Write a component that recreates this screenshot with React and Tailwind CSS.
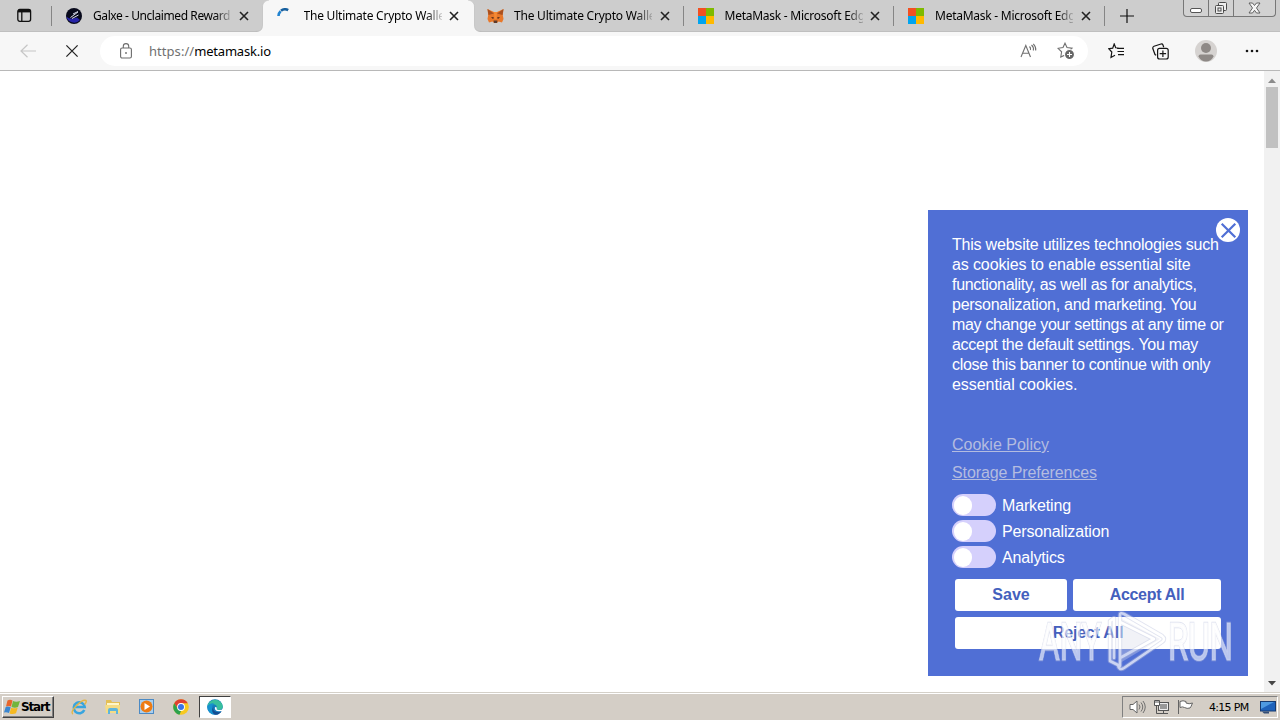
import React from "react";

function Cross({ className = "" }) {
  return (
    <svg viewBox="0 0 10 10" className={"shrink-0 " + className} fill="none" stroke="currentColor">
      <path d="M1 1l8 8M9 1l-8 8" />
    </svg>
  );
}

function GalxeIcon() {
  return (
    <svg width="16" height="16" viewBox="0 0 16 16" className="shrink-0">
      <circle cx="8" cy="8" r="8" fill="#080a1c" />
      <path d="M.3 8.5C2 10.500 6 11.500 11 9.500L14 12A8 8 0 0 1 .3 8.500Z" fill="#2724a8" />
      <path d="M4.500 9.500L12 4M6 10.500l6.500-3.500M7 6l5-2.500" stroke="#d9dcec" strokeWidth="1" fill="none" />
    </svg>
  );
}

function Spinner() {
  return (
    <svg width="16" height="16" viewBox="0 0 16 16" className="shrink-0" fill="none" strokeWidth="2.600">
      <path d="M1.500 8A6.500 6.500 0 0 1 3.600 3.200" stroke="#2183d0" />
      <path d="M4 2.800A6.500 6.500 0 0 1 11.200 2.200" stroke="#17609f" />
    </svg>
  );
}

function FoxIcon() {
  return (
    <svg width="17" height="16" viewBox="0 0 17 16" className="shrink-0">
      <path d="M.5 1L7 4h3l6.500-3-.7 6 .7 4-1.500 3.500-3.500-1L10 15H7l-1.500-1.500-3.500 1L.5 11l.7-4z" fill="#e8782a" />
      <path d="M.5 1L7 5.500 1.500 7zM16.500 1L10 5.500 15.500 7z" fill="#a9501f" />
      <path d="M6.500 12.500h4L10 15H7z" fill="#5b3b2c" />
      <path d="M4 9l3 .5-1 1.500zM13 9l-3 .5 1 1.500z" fill="#40251b" />
      <path d="M7 4h3l-.5 7h-2z" fill="#f58a34" />
    </svg>
  );
}

function MicrosoftIcon() {
  return (
    <span className="grid h-4 w-4 shrink-0 grid-cols-2">
      <i className="bg-[#f25022]" />
      <i className="bg-[#7fba00]" />
      <i className="bg-[#00a4ef]" />
      <i className="bg-[#ffb900]" />
    </span>
  );
}

const tabs = [
  { icon: GalxeIcon, title: "Galxe - Unclaimed Reward", tracking: "tracking-[-0.42px]" },
  { icon: Spinner, title: "The Ultimate Crypto Walle", tracking: "tracking-[-0.22px]", active: true },
  { icon: FoxIcon, title: "The Ultimate Crypto Walle", tracking: "tracking-[-0.22px]", divider: true },
  { icon: MicrosoftIcon, title: "MetaMask - Microsoft Edg", tracking: "tracking-[-0.25px]", divider: true },
  { icon: MicrosoftIcon, title: "MetaMask - Microsoft Edg", tracking: "tracking-[-0.25px]", divider: true },
];

function Tab({ icon: Icon, title, tracking, active, divider }) {
  return (
    <div className={"relative flex h-8 w-[210.5px] shrink-0 items-center pl-3.5 " + (active ? "z-10" : "")}>
      {active && (
        <svg className="absolute -left-2 top-0" width="228" height="32" viewBox="0 0 228 32">
          <path d="M0 32C5 32 7.500 30 7.500 25V7C7.500 3 10 0 14 0H213C217 0 219.500 3 219.500 7V25C219.500 30 222 32 227 32Z" fill="#f7f7f7" />
          <path d="M0 31.500C5 31.500 7.500 30 7.500 25V7C7.500 3 10 .5 14 0M213 0C217 .5 219.500 3 219.500 7V25C219.500 30 222 31.500 227 31.500" fill="none" stroke="#bdbdbd" strokeWidth=".7" />
        </svg>
      )}
      <span className="relative flex w-[27px] shrink-0">
        <Icon />
      </span>
      <span className={"relative w-[138px] shrink-0 whitespace-nowrap text-[12px] leading-4 text-black [mask-image:linear-gradient(to_right,black_122px,transparent_141px)] " + tracking}>
        {title}
      </span>
      <Cross className="relative ml-[7.500px] h-[10px] w-[10px] stroke-[1.6] text-[#222]" />
      {divider && <span className="absolute right-0 top-1.5 h-5 w-px bg-[#858585]" />}
    </div>
  );
}

function WindowControls() {
  return (
    <div className="ml-auto mr-[4px] flex h-[17px] w-[93px] shrink-0 self-start rounded-b-[4px] border border-t-0 border-[#777] bg-[#d2d2d2]">
      <span className="flex w-[25px] items-center justify-center border-r border-[#777]">
        <i className="mt-1 h-[5px] w-3 rounded-[2px] border border-[#555] bg-white" />
      </span>
      <span className="flex w-[25px] items-center justify-center border-r border-[#777]">
        <svg width="14" height="14" viewBox="0 0 14 14" fill="#eee" stroke="#4a4a4a">
          <rect x="4.500" y="1.500" width="8" height="8" rx="1" />
          <rect x="1.500" y="4.500" width="8" height="8" rx="1" />
          <rect x="4" y="7" width="3" height="3" />
        </svg>
      </span>
      <span className="flex flex-1 items-center justify-center">
        <svg width="13" height="12" viewBox="0 0 13 12">
          <path d="M1 1h3.500l2 2.500L8.500 1H12L8.500 6l3.500 5H8.500l-2-2.700L4.500 11H1l3.500-5z" fill="#f5f5f5" stroke="#555" strokeWidth=".9" />
        </svg>
      </span>
    </div>
  );
}

function TabStrip() {
  return (
    <div className="flex h-8 items-center border-b border-[#bfbfbf] bg-[#cdcdcd]">
      <div className="relative flex h-8 w-[52px] shrink-0 items-center pl-[17px]">
        <svg width="15" height="15" viewBox="0 0 15 15" fill="none" stroke="#111" strokeWidth="1.300">
          <rect x=".8" y="1.500" width="12.800" height="11.800" rx="2" />
          <path d="M1 3h12.500" strokeWidth="2.800" />
          <path d="M4.800 4v9" />
        </svg>
        <span className="absolute right-0 top-1.5 h-5 w-px bg-[#858585]" />
      </div>
      {tabs.map((t, i) => (
        <Tab key={i} {...t} />
      ))}
      <svg width="14" height="14" viewBox="0 0 14 14" className="ml-[15px] shrink-0" stroke="#111" strokeWidth="1.200">
        <path d="M7 0v14M0 7h14" />
      </svg>
      <WindowControls />
    </div>
  );
}

function Toolbar() {
  return (
    <div className="flex h-[39px] items-center border-b border-[#b8b8b8] bg-[#f7f7f7]">
      <svg width="16" height="14" viewBox="0 0 16 14" className="ml-5 shrink-0" fill="none" stroke="#c6c6c6" strokeWidth="1.200">
        <path d="M16 7H1M7.500 .7L1 7l6.500 6.300" />
      </svg>
      <Cross className="ml-[29px] h-[14px] w-[14px] stroke-[0.9] text-[#222]" />
      <div className="ml-[21px] flex h-[30px] w-[988px] shrink-0 items-center rounded-full bg-white pl-5">
        <svg width="12" height="16" viewBox="0 0 12 16" fill="none" stroke="#6c6c6c" strokeWidth="1.100">
          <rect x=".6" y="5" width="10.800" height="10" rx="1.500" />
          <path d="M3.300 5V3.300a2.700 2.700 0 0 1 5.400 0V5" />
          <circle cx="6" cy="10" r=".9" fill="#6c6c6c" stroke="none" />
        </svg>
        <span className="ml-[17px] text-[13px] leading-5 tracking-[-0.2px] text-black">
          <span className="tracking-[0.05px] text-[#707070]">https://</span>metamask.io
        </span>
        <div className="ml-auto mr-[13px] flex items-center gap-5">
          <svg width="17" height="16" viewBox="0 0 17 16" fill="none" stroke="#707070" strokeWidth="1.100">
            <path d="M1 14L5.800 2.500 10.500 14M2.600 10.200h6.300M9.500 3.500q1.500 1.500 1 3.500M11.500 2q2.600 2.300 1.800 5.500M13.300 .8q3 3 2.400 6.700" />
          </svg>
          <svg width="18" height="18" viewBox="0 0 18 18" fill="none" stroke="#707070" strokeWidth="1.100">
            <path d="M8 1.200L10 5.600l5 .6-3.500 3.400L8 13l-4.200 2 .8-5.200L1 6.300l5-.7z" />
            <circle cx="12.500" cy="12.500" r="5" fill="#666" stroke="#fff" />
            <path d="M12.500 10v5M10 12.500h5" stroke="#fff" />
          </svg>
        </div>
      </div>
      <svg width="17" height="16" viewBox="0 0 17 16" className="ml-5 shrink-0" fill="none" stroke="#151515" strokeWidth="1.200">
        <path d="M10.500 5L7.700 4.800 6.200 1 4.700 5.200.8 5.700l3 3.300-.8 5.500 4-2.200M9 5.300h7M9.500 8.500H16M10 11.700h6" />
      </svg>
      <svg width="17" height="17" viewBox="0 0 17 17" className="ml-[27px] shrink-0" fill="none" stroke="#151515" strokeWidth="1.200">
        <path d="M4.200 12.200L3 11.500 .8 5.500Q.5 3.800 2 3.200L9 1q1.500-.3 2 1l.7 2.200" />
        <rect x="5.600" y="5.400" width="10.600" height="10.600" rx="2" />
        <path d="M10.900 7.500v6.400M7.700 10.700h6.400" />
      </svg>
      <svg width="22" height="22" viewBox="0 0 22 22" className="ml-[26px] shrink-0">
        <circle cx="11" cy="11" r="11" fill="#d6d3d1" />
        <circle cx="11" cy="8" r="5" fill="#8e8986" />
        <path d="M3.500 16.500q0-2 2-2h11q2 0 2 2Q16 21.500 11 21.500T3.500 16.500z" fill="#8e8986" />
      </svg>
      <svg width="14" height="4" viewBox="0 0 14 4" className="ml-7 shrink-0" fill="#151515">
        <circle cx="2" cy="2" r="1.300" />
        <circle cx="7" cy="2" r="1.300" />
        <circle cx="12" cy="2" r="1.300" />
      </svg>
    </div>
  );
}

function Toggle({ label }) {
  return (
    <div className="flex h-[22px] items-center gap-1.5">
      <span className="flex h-[22px] w-11 items-center rounded-full bg-[#d5d0fc] pl-0.5">
        <i className="h-[19px] w-[18px] rounded-full bg-white" />
      </span>
      <span className="pt-0.5 leading-5 tracking-[-0.15px]">{label}</span>
    </div>
  );
}

function WatermarkWord({ x, width, children }) {
  return (
    <g fontFamily="Roboto, sans-serif" fontSize="52" fontWeight="400">
      <text x={x} y="52" textLength={width} lengthAdjust="spacingAndGlyphs" fill="none" stroke="#b9bfdc" strokeOpacity=".6" strokeWidth="2.500">
        {children}
      </text>
      <text x={x} y="52" textLength={width} lengthAdjust="spacingAndGlyphs" fill="#fff" fillOpacity=".85" stroke="#fff" strokeWidth=".6">
        {children}
      </text>
    </g>
  );
}

function Watermark() {
  return (
    <svg className="absolute left-[108px] top-[398px] opacity-70" width="200" height="68" viewBox="0 0 200 68">
      <WatermarkWord x={3} width={62}>ANY</WatermarkWord>
      <WatermarkWord x={132} width={65}>RUN</WatermarkWord>
      <path d="M84 10L124 31 84 55Z" fill="#d9dce9" fillOpacity=".5" />
      <g fill="none" strokeLinejoin="round" strokeLinecap="round">
        <path d="M78 50V10L74 13V53L84 58V50L118 31 84 14V50M84 14V7Q84 4 88 6L126 28Q130 31 126 34L88 60Q83 63 82 57" stroke="#b9bfdc" strokeOpacity=".6" strokeWidth="4.500" />
        <path d="M78 50V10L74 13V53L84 58V50L118 31 84 14V50M84 14V7Q84 4 88 6L126 28Q130 31 126 34L88 60Q83 63 82 57" stroke="#fff" strokeWidth="2.600" />
      </g>
    </svg>
  );
}

const message = [
  ["This website utilizes technologies such", "tracking-[-0.21px]"],
  ["as cookies to enable essential site", "tracking-[-0.12px]"],
  ["functionality, as well as for analytics,", "tracking-[-0.3px]"],
  ["personalization, and marketing. You", "tracking-[-0.26px]"],
  ["may change your settings at any time or", "tracking-[-0.31px]"],
  ["accept the default settings. You may", "tracking-[-0.28px]"],
  ["close this banner to continue with only", "tracking-[-0.31px]"],
  ["essential cookies.", "tracking-[-0.05px]"],
];

function CookieBanner() {
  return (
    <section className="relative h-[466px] w-80 bg-[#506fd5] px-6 pt-[25px] font-['Liberation_Sans',Arial,sans-serif] text-[16px] text-white">
      <span className="absolute right-2 top-2 flex h-6 w-6 items-center justify-center rounded-full bg-white text-[#506fd5]">
        <Cross className="h-[17px] w-[17px] stroke-[1.3]" />
      </span>
      <p className="whitespace-nowrap leading-5">
        {message.map(([line, tracking]) => (
          <span key={line} className={"block " + tracking}>
            {line}
          </span>
        ))}
      </p>
      <div className="mt-9 flex flex-col items-start text-[#b4bce0]">
        <a className="leading-7 underline underline-offset-1">Cookie Policy</a>
        <a className="leading-7 tracking-[-0.1px] underline underline-offset-1">Storage Preferences</a>
      </div>
      <div className="mt-[7px] flex flex-col gap-1">
        <Toggle label="Marketing" />
        <Toggle label="Personalization" />
        <Toggle label="Analytics" />
      </div>
      <div className="ml-[3px] mt-[11px] grid w-[266px] grid-cols-[112px_148px] gap-1.5 font-bold text-[#4460bd]">
        <button className="h-8 rounded-[3px] bg-white">Save</button>
        <button className="h-8 rounded-[3px] bg-white tracking-[-0.3px]">Accept All</button>
        <button className="col-span-2 h-8 rounded-[3px] bg-white tracking-[-0.2px]">Reject All</button>
      </div>
      <Watermark />
    </section>
  );
}

function Scrollbar() {
  return (
    <div className="flex w-4 flex-col items-center bg-[#f1f1f1]">
      <svg width="8" height="5" viewBox="0 0 8 5" className="mt-[7px]">
        <path d="M0 5l4-4.500L8 5z" fill="#8b8b8b" />
      </svg>
      <span className="mt-1 h-[61px] w-3 bg-[#c1c1c1]" />
      <svg width="8" height="5" viewBox="0 0 8 5" className="mb-1.5 mt-auto">
        <path d="M0 0l4 4.500L8 0z" fill="#454545" />
      </svg>
    </div>
  );
}

function Taskbar() {
  return (
    <div className="flex h-[28px] items-center border-t border-[#d4d0c8] bg-[#d4cec6] pb-[2px] pt-[3px] shadow-[inset_0_1px_0_white]">
      <div className="ml-0.5 flex h-[22px] w-[52px] items-center gap-px border border-b-[#404040] border-l-white border-r-[#404040] border-t-white pl-px shadow-[inset_-1px_-1px_0_#808080]">
        <svg width="16" height="16" viewBox="0 0 16 16" className="shrink-0">
          <path d="M3.500 1.500Q6 0 8.500 1.500L7 7.500Q4.500 6.500 2 7.500z" fill="#e8652a" />
          <path d="M9 2Q12 3.500 16 2L14 8Q11 9.500 7.500 8z" fill="#72b53c" />
          <path d="M1.700 8Q4 7 6.700 8.300L5 14Q2.500 12.700 0 13.500z" fill="#3a86d0" />
          <path d="M7.200 8.700Q10 10 13.700 8.700L12 14.300Q9 15.800 5.500 14.500z" fill="#f5b921" />
        </svg>
        <span className="whitespace-nowrap font-['DejaVu_Sans',sans-serif] text-[12px] font-bold leading-4 tracking-[-1.15px] text-black">Start</span>
      </div>
      <svg width="18" height="18" viewBox="0 0 18 18" className="ml-4 shrink-0" fill="none">
        <path d="M14.300 12A5.500 5.500 0 1 1 14.700 9H5" stroke="#38a5df" strokeWidth="2.500" />
        <path d="M3 16C-1.500 14 12 .5 16 2.500Q17 4 14.500 6.500" stroke="#e5b645" strokeWidth="1.400" />
      </svg>
      <svg width="18" height="18" viewBox="0 0 18 18" className="ml-4 shrink-0">
        <path d="M2 2h5l1 2h8v11H2z" fill="#e4bf55" />
        <path d="M3 5h12v3H3z" fill="#fff6c8" />
        <path d="M1 7h15v8H2z" fill="#f5dc85" />
        <path d="M4 16v-4q0-2 2-2h6q2 0 2 2v4h-2v-3H6v3z" fill="#5eb5dc" />
      </svg>
      <svg width="18" height="18" viewBox="0 0 18 18" className="ml-4 shrink-0">
        <rect x="1.500" y="1.500" width="14" height="14" fill="#a9cfee" stroke="#4c8ac4" />
        <circle cx="8.500" cy="8.500" r="6" fill="#ee7b12" />
        <path d="M6.500 5l5.500 3.500L6.500 12z" fill="#fff" />
      </svg>
      <svg width="16" height="16" viewBox="0 0 16 16" className="ml-[17px] shrink-0">
        <circle cx="8" cy="8" r="7.800" fill="#f7c91f" />
        <path d="M1.200 4.200A7.800 7.800 0 0 1 14.800 4.200H8L5 10z" fill="#df4032" />
        <path d="M1.200 4.200L5 10l3 2-1.500 3.700A7.800 7.800 0 0 1 1.200 4.200z" fill="#2da24c" />
        <circle cx="8" cy="8" r="3.900" fill="#fff" />
        <circle cx="8" cy="8" r="3" fill="#3974e8" />
      </svg>
      <div className="ml-2.5 flex h-[22px] w-8 items-center justify-center border border-b-white border-l-[#404040] border-r-white border-t-[#404040] bg-white">
        <svg width="16" height="16" viewBox="0 0 16 16">
          <circle cx="8" cy="8" r="7.800" fill="#167dbe" />
          <path d="M.4 7A7.800 7.800 0 0 1 15.800 7.500Q15.500 11 11 11 9 10.500 10 9 10 5.500 6 5.200 2 5 .4 7z" fill="#38bf9d" />
          <path d="M.4 7Q3 3.500 7 4.500 3.500 8 6 12.500L8 15.800A7.800 7.800 0 0 1 .4 7z" fill="#1592cf" />
          <path d="M6.500 7.500Q5 13 11.500 13.300 13.500 13.200 14.700 12.200 12 16 8 15.800 3 13 6.500 7.500z" fill="#154d91" />
          <path d="M8 8Q7 12 12 12.300L16 12V9.500Q15 11.500 11 11 9 10.500 9.800 8.500z" fill="#fff" />
        </svg>
      </div>
      <div className="ml-auto mr-[2px] flex h-[22px] w-[156px] items-center border border-b-white border-l-[#808080] border-r-white border-t-[#808080] pl-1.5">
        <svg width="17" height="16" viewBox="0 0 17 16" className="shrink-0" fill="none" stroke="#646464">
          <path d="M1 5.500h3L8 2v12l-4-3.500H1z" fill="#fff" />
          <path d="M10 5.500q2 2.500 0 5M12 3.500q3.500 4.500 0 9M14 2q4.500 6 0 12" strokeWidth=".9" />
        </svg>
        <svg width="17" height="16" viewBox="0 0 17 16" className="ml-[7px] shrink-0" stroke="#555">
          <rect x="5.500" y="3.500" width="10" height="8" fill="#999" />
          <path d="M6.500 4.500h8v6h-8z" stroke="#eee" fill="none" />
          <path d="M7 14.500h8M10.500 12v2M3.500 6v8.500H7" fill="none" />
          <path d="M1.500 1.500h5v5h-5zM3 1v3M5 1v3" fill="#fff" />
        </svg>
        <svg width="17" height="16" viewBox="0 0 17 16" className="ml-[7px] shrink-0" fill="#fff" stroke="#646464">
          <path d="M1.500 1v14M3 2.500q3-1.500 6 0V4q3 1.500 6.500 0Q14 8 13 9q-3 1-5.500-.5-2-1.200-4.500 0z" />
        </svg>
        <span className="ml-[15px] mt-0.5 whitespace-nowrap font-['DejaVu_Sans',sans-serif] text-[11px] tracking-[-0.7px] text-black">4:15 PM</span>
        <svg width="16" height="14" viewBox="0 0 16 14" className="ml-auto mr-px shrink-0">
          <rect x=".5" y="1.500" width="15" height="9.500" fill="#1e62bb" stroke="#163a70" />
          <path d="M1 2h13L1 9z" fill="#4e9ae2" />
          <path d="M2 11.500h7v2H4z" fill="#344e76" />
        </svg>
      </div>
    </div>
  );
}

export default function App() {
  return (
    <div className="flex h-[720px] w-[1280px] flex-col overflow-hidden bg-white font-['Noto_Sans',sans-serif]">
      <TabStrip />
      <Toolbar />
      <div className="flex h-[621px] justify-end">
        <main className="flex flex-1 justify-end pr-4 pt-[139px]">
          <CookieBanner />
        </main>
        <Scrollbar />
      </div>
      <Taskbar />
    </div>
  );
}
